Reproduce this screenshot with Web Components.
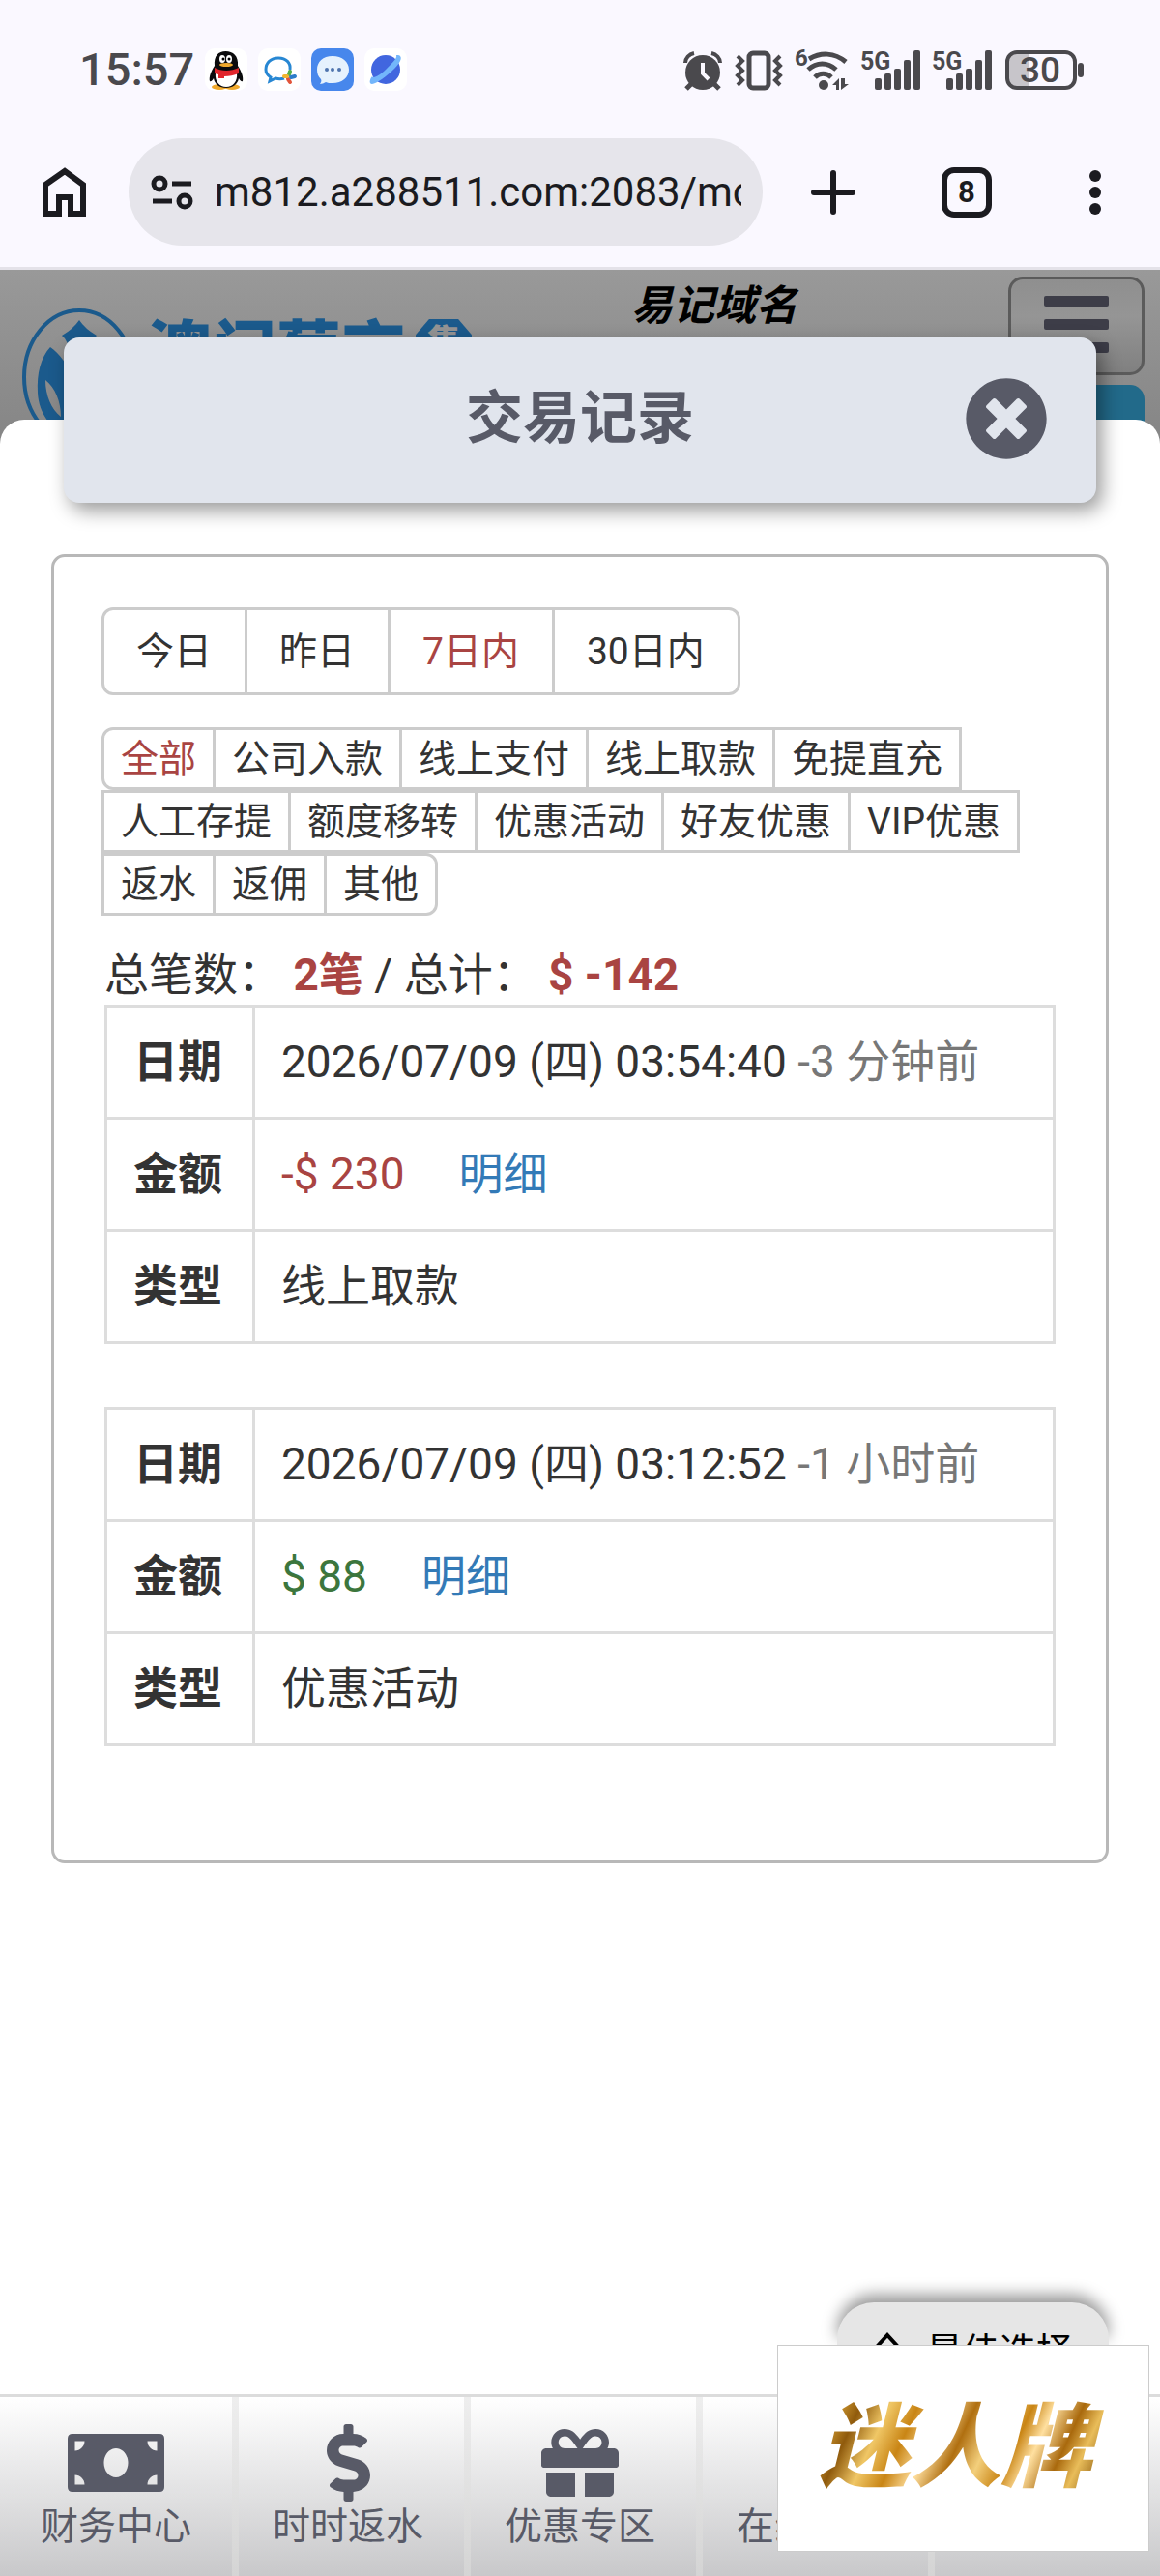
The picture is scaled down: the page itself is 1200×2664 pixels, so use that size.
<!DOCTYPE html>
<html lang="zh-CN">
<head>
<meta charset="utf-8">
<meta name="viewport" content="width=device-width, initial-scale=1">
<title>交易记录</title>
<style>
  body {
    margin: 0;
    background: #fff;
    color: #333;
    font-family: Roboto, "Noto Sans CJK SC", sans-serif;
  }
</style>
</head>
<body>
<mobile-app></mobile-app>

<script>
const reset = /*html*/`
  <style>
    * { box-sizing: border-box; }
    button, input { font: inherit; color: inherit; margin: 0; padding: 0; border: 0; background: none; }
    a { color: inherit; text-decoration: none; }
    svg { display: block; flex: none; overflow: visible; }
  </style>
`;

class StatusBar extends HTMLElement {

  constructor() {
    super();
    this.shadow = this.attachShadow({ mode: 'open' });
  }

  connectedCallback() {
    this.render();
  }

  signal() {
    return /*html*/`
      <svg width="62" height="44" viewBox="0 0 62 44" fill="#4a494d">
        <text x="0" y="22" font-size="25" font-weight="700">5G</text>
        <rect x="15" y="31" width="7" height="12" rx="2"/>
        <rect x="25" y="26" width="7" height="17" rx="2"/>
        <rect x="35" y="21" width="7" height="22" rx="2"/>
        <rect x="45" y="12" width="7" height="31" rx="2"/>
        <rect x="55" y="2" width="7" height="41" rx="2"/>
      </svg>
    `;
  }

  render() {
    this.shadow.innerHTML = /*html*/`
      ${reset}
      <style>
        :host { display: block; background: #faf8ff; color: #4a494d; }
        .bar { display: flex; align-items: center; justify-content: space-between; padding: 50px 78px 26px 82px; }
        .left, .right { display: flex; align-items: center; height: 44px; }
        .left { gap: 11px; }
        .right { gap: 12px; }
        .time { font-size: 47px; line-height: 44px; font-weight: 500; }
      </style>
      <div class="bar">
        <div class="left">
          <span class="time">15:57</span>
          <svg width="44" height="44" viewBox="0 0 44 44">
            <rect width="44" height="44" rx="10" fill="#fff"/>
            <ellipse cx="15" cy="40" rx="8" ry="3" fill="#f0a92c"/>
            <ellipse cx="28" cy="40" rx="8" ry="3" fill="#f0a92c"/>
            <path d="M10 18C9 8 14 3 21.500 3S35 8 34 18c4 6 6 12 5 16-1 1-3-1-4-3-1 6-6 10-13 10S10 37 9 31c-1 2-3 4-4 3-1-4 1-10 5-16z" fill="#0b0b0d"/>
            <path d="M11 26c-1 8 4 14 11 14s12-6 11-14z" fill="#fff"/>
            <path d="M10 20c7 4 17 4 25 0v6c-5 2-10 3-15 3v2h-6v-4l-4-1z" fill="#e0252b"/>
            <ellipse cx="18" cy="11" rx="3" ry="4" fill="#fff"/>
            <ellipse cx="25" cy="11" rx="3" ry="4" fill="#fff"/>
            <circle cx="19" cy="11" r="1.500" fill="#000"/><circle cx="25" cy="11" r="1.500" fill="#000"/>
            <ellipse cx="22" cy="17" rx="7" ry="2" fill="#f0a92c"/>
          </svg>
          <svg width="44" height="44" viewBox="0 0 44 44">
            <rect width="44" height="44" rx="10" fill="#fff"/>
            <path d="M33 22c1-7-4-12-12-12S8 15 8 22c0 4 2 6 5 8l-1 4 6-3c3 1 6 1 9 0" fill="none" stroke="#2787d3" stroke-width="3"/>
            <g stroke-width="4" stroke-linecap="round">
              <path d="M32 27l1-3" stroke="#56b04a"/><path d="M34 30l4-1" stroke="#2c7cc9"/>
              <path d="M31 32l2 3" stroke="#e2553b"/><path d="M30 29l-3 0" stroke="#f2b42e"/>
            </g>
          </svg>
          <svg width="44" height="44" viewBox="0 0 44 44">
            <rect width="44" height="44" rx="10" fill="#4787ec"/>
            <path d="M22 8c10 0 17 6 17 14s-7 14-17 14c-3 0-5 0-7-1-2 1-4 2-6 2 1-2 2-3 1-5-3-3-4-6-4-10 0-8 6-14 16-14z" fill="#e6f2fd"/>
            <circle cx="16" cy="22" r="2" fill="#4f74ad"/><circle cx="22" cy="22" r="2" fill="#4f74ad"/><circle cx="29" cy="22" r="2" fill="#4f74ad"/>
          </svg>
          <svg width="44" height="44" viewBox="0 0 44 44">
            <rect width="44" height="44" rx="10" fill="#fff"/>
            <circle cx="22" cy="22" r="15" fill="#4166df"/>
            <path d="M35 7c5 1 3 7-4 14S12 37 8 37s-2-6 0-8c1 3 8-1 15-8s11-11 10-14z" fill="#73b6fb"/>
          </svg>
        </div>
        <div class="right">
          <svg width="42" height="44" viewBox="0 0 42 44" fill="#4a494d">
            <circle cx="21" cy="25" r="18"/>
            <path d="M3 15c0-5 4-9 9-10M39 15c0-5-4-9-9-10" fill="none" stroke="#4a494d" stroke-width="4"/>
            <path d="M9 37l-5 5M33 37l5 5" stroke="#4a494d" stroke-width="5"/>
            <path d="M21 15v11l6 6" fill="none" stroke="#faf8ff" stroke-width="4"/>
          </svg>
          <svg width="50" height="44" viewBox="0 0 50 44" fill="none" stroke="#4a494d">
            <rect x="15" y="5" width="20" height="36" rx="4" stroke-width="5"/>
            <path d="M3 8l5 5-5 5 5 5-5 5 5 5-5 5M47 8l-5 5 5 5-5 5 5 5-5 5 5 5" stroke-width="4"/>
          </svg>
          <svg width="56" height="44" viewBox="0 0 56 44" fill="#4a494d">
            <text x="0" y="18" font-size="24" font-weight="700">6</text>
            <path d="M15 11c12-7 26-7 38 3M14 22c9-8 20-8 29 0M21 30c5-5 12-5 17 0" fill="none" stroke="#4a494d" stroke-width="5"/>
            <circle cx="30" cy="38" r="5"/>
            <path d="M46 31v12h-3v-5h-4zM48 31v12l8-6h-4v-6z"/>
          </svg>
          ${this.signal()}
          ${this.signal()}
          <svg width="84" height="44" viewBox="0 0 84 44">
            <path d="M6 5h20v34H8q-4 0-4-6V11q0-6 4-6z" fill="#c7c5ca"/>
            <rect x="4" y="4" width="70" height="37" rx="10" fill="none" stroke="#4a494d" stroke-width="4"/>
            <rect x="77" y="15" width="6" height="15" rx="3" fill="#4a494d"/>
            <text x="38" y="35" font-size="37" text-anchor="middle" fill="#4a494d" font-weight="500">30</text>
          </svg>
        </div>
      </div>
    `;
  }
}

class BrowserBar extends HTMLElement {

  constructor() {
    super();
    this.shadow = this.attachShadow({ mode: 'open' });
  }

  connectedCallback() {
    this.render();
  }

  render() {
    this.shadow.innerHTML = /*html*/`
      ${reset}
      <style>
        :host { display: block; background: #faf8ff; border-bottom: 3px solid #e4e2e9; color: #1b1b20; }
        .bar { display: flex; align-items: center; padding: 23px 58px 22px 40px; }
        .home { margin-right: 40px; }
        .address { flex: 1; min-width: 0; display: flex; align-items: center; gap: 22px; height: 111px; padding: 0 22px 0 24px; border-radius: 56px; background: #e6e5eb; }
        .address input { flex: 1; min-width: 0; height: 60px; font-size: 42px; }
        .actions { display: flex; align-items: center; gap: 88px; margin-left: 49px; }
        .tabs { width: 52px; height: 52px; border: 6px solid #1b1b20; border-radius: 13px; font-size: 31px; line-height: 40px; font-weight: 700; text-align: center; }
        .menu { padding-left: 10px; }
      </style>
      <div class="bar">
        <button class="home" aria-label="主页">
          <svg width="53" height="54" viewBox="0 0 53 54" fill="none" stroke="#1b1b20" stroke-width="6">
            <path d="M7 19L27 5l19 14v30H33V32H21v17H7z"/>
          </svg>
        </button>
        <div class="address">
          <svg width="43" height="36" viewBox="0 0 43 36" fill="none" stroke="#1b1b20" stroke-width="5">
            <circle cx="8" cy="9" r="6"/><path d="M21 9h20M1 27h20"/><circle cx="34" cy="27" r="6"/>
          </svg>
          <input type="text" aria-label="网址" value="m812.a288511.com:2083/mo">
        </div>
        <div class="actions">
          <button aria-label="新标签页">
            <svg width="48" height="48" viewBox="0 0 48 48" stroke="#1b1b20" stroke-width="6" stroke-linecap="round">
              <path d="M24 4v40M4 24h40"/>
            </svg>
          </button>
          <button class="tabs">8</button>
          <button class="menu" aria-label="菜单">
            <svg width="18" height="48" viewBox="0 0 18 48" fill="#1b1b20">
              <circle cx="9" cy="7" r="6"/><circle cx="9" cy="24" r="6"/><circle cx="9" cy="41" r="6"/>
            </svg>
          </button>
        </div>
      </div>
    `;
  }
}

class SiteHeader extends HTMLElement {

  constructor() {
    super();
    this.shadow = this.attachShadow({ mode: 'open' });
  }

  connectedCallback() {
    this.render();
  }

  render() {
    this.shadow.innerHTML = /*html*/`
      ${reset}
      <style>
        :host { display: block; height: 180px; overflow: hidden; background: linear-gradient(#999, #858585); }
        .row { display: flex; align-items: flex-start; padding: 7px 16px 0 22px; }
        .logo { display: flex; align-items: flex-start; gap: 10px; padding-top: 32px; color: #1b5a8c; }
        .brand { display: flex; align-items: flex-start; gap: 10px; padding-top: 8px; font-size: 67px; line-height: 76px; font-weight: 900; }
        .badge { margin-top: 4px; width: 58px; height: 68px; background: #1b5a8c; color: #949494; font-size: 34px; line-height: 46px; text-align: center; clip-path: polygon(24% 0, 76% 0, 100% 24%, 100% 76%, 76% 100%, 24% 100%, 0 76%, 0 24%); }
        .domain { margin-left: auto; padding-right: 218px; color: #000; font-size: 43px; line-height: 60px; font-weight: 700; font-style: italic; }
        .side { display: flex; flex-direction: column; gap: 10px; }
        .toggle { width: 141px; height: 102px; border: 3px solid #5b5b5b; border-radius: 15px; display: flex; flex-direction: column; align-items: center; gap: 13px; padding-top: 17px; background: linear-gradient(#8f8f8f, #959595 40%, #808080); }
        .toggle i { width: 67px; height: 11px; border-radius: 2px; background: #3d3d48; }
        .login { height: 60px; border-radius: 15px; background: #226a8a; }
      </style>
      <div class="row">
        <div class="logo">
          <svg width="120" height="140" viewBox="0 0 120 140" fill="#1b5a8c">
            <ellipse cx="60" cy="72" rx="57" ry="69" fill="none" stroke="#1b5a8c" stroke-width="4"/>
            <path d="M60 13q6 9 18 16-7 5-8 20H50q-1-15-8-20 12-7 18-16z"/>
            <path fill-rule="evenodd" d="M30 41c10 7 18 18 22 30v65c-20-8-34-26-35-48-1-20 3-36 13-47zM25 75c0 16 6 30 16 38 0-16-6-30-16-38z"/>
          </svg>
          <div class="brand">澳门葡京<span class="badge">集</span></div>
        </div>
        <span class="domain">易记域名</span>
        <div class="side">
          <button class="toggle" aria-label="导航"><i></i><i></i><i></i></button>
          <button class="login" aria-label="登录"></button>
        </div>
      </div>
    `;
  }
}

class DialogTitle extends HTMLElement {

  constructor() {
    super();
    this.shadow = this.attachShadow({ mode: 'open' });
  }

  connectedCallback() {
    this.render();
  }

  render() {
    this.shadow.innerHTML = /*html*/`
      ${reset}
      <style>
        :host { display: block; }
        .title { display: grid; grid-template-columns: 1fr auto 1fr; align-items: center; height: 171px; padding: 0 50px 4px; border-radius: 16px; background: #e1e5ed; color: #585a67; box-shadow: 6px 8px 20px rgba(0, 0, 0, 0.4); }
        h1 { grid-column: 2; margin: 0; font-size: 59px; line-height: 80px; font-weight: 700; }
        button { justify-self: end; }
      </style>
      <div class="title">
        <h1><slot></slot></h1>
        <button aria-label="关闭">
          <svg width="86" height="86" viewBox="0 0 512 512" fill="#585a67">
            <path d="M256 8C119 8 8 119 8 256s111 248 248 248 248-111 248-248S393 8 256 8zm121.600 313.100c4.700 4.700 4.700 12.300 0 17L338 377.600c-4.700 4.700-12.300 4.700-17 0L256 312l-65.100 65.600c-4.700 4.700-12.300 4.700-17 0L134.400 338c-4.700-4.700-4.700-12.300 0-17l65.600-65-65.600-65.100c-4.700-4.700-4.700-12.300 0-17l39.600-39.600c4.700-4.700 12.300-4.700 17 0l65 65.700 65.100-65.600c4.700-4.700 12.300-4.700 17 0l39.600 39.600c4.700 4.700 4.700 12.300 0 17L312 256l65.600 65.100z"/>
          </svg>
        </button>
      </div>
    `;
  }
}

class FilterGroup extends HTMLElement {

  constructor() {
    super();
    this.shadow = this.attachShadow({ mode: 'open' });
  }

  connectedCallback() {
    this.render();
    this.shadow.addEventListener('click', (event) => {
      const button = event.target.closest('button');
      if (button) this.select(button);
    });
  }

  select(button) {
    this.shadow.querySelectorAll('button').forEach(item => {
      item.setAttribute('aria-pressed', item === button);
    });
  }

  render() {
    const options = this.getAttribute('options').split(',');
    const active = this.getAttribute('active');

    this.shadow.innerHTML = /*html*/`
      ${reset}
      <style>
        :host { display: block; }
        .group { display: flex; flex-wrap: wrap; }
        button { height: 65px; padding: 0 17px; margin-right: -3px; border: 3px solid #ccc; background: #fff; color: #333; font-size: 39px; line-height: 56px; white-space: nowrap; }
        :host([size="large"]) button { height: 91px; padding: 0 34px 0 33px; }
        button:first-child { border-radius: 12px 0 0 12px; }
        button:last-child { border-radius: 0 12px 12px 0; }
        button[aria-pressed="true"] { color: #a94442; }
      </style>
      <div class="group" role="group">
        ${options.map(name => `<button aria-pressed="${name === active}">${name}</button>`).join('')}
      </div>
    `;
  }
}

class RecordTable extends HTMLElement {

  constructor() {
    super();
    this.shadow = this.attachShadow({ mode: 'open' });
  }

  connectedCallback() {
    this.render();
  }

  render() {
    const amount = this.getAttribute('amount');
    const tone = amount.startsWith('-') ? 'out' : 'in';

    this.shadow.innerHTML = /*html*/`
      ${reset}
      <style>
        :host { display: block; }
        table { width: 100%; border-collapse: collapse; font-size: 46px; line-height: 58px; }
        th, td { height: 116px; border: 3px solid #ddd; padding: 0 27px 2px; text-align: left; }
        th { width: 153px; white-space: nowrap; }
        .ago { color: #777; }
        .out { color: #a94442; }
        .in { color: #3c763d; }
        a { margin-left: 56px; color: #337ab7; }
      </style>
      <table>
        <tr><th scope="row">日期</th><td>${this.getAttribute('date')} <span class="ago">${this.getAttribute('ago')}</span></td></tr>
        <tr><th scope="row">金额</th><td><span class="${tone}">${amount}</span><a href="#detail">明细</a></td></tr>
        <tr><th scope="row">类型</th><td>${this.getAttribute('kind')}</td></tr>
      </table>
    `;
  }
}

class RecordPanel extends HTMLElement {

  constructor() {
    super();
    this.shadow = this.attachShadow({ mode: 'open' });
  }

  connectedCallback() {
    this.render();
  }

  render() {
    this.shadow.innerHTML = /*html*/`
      ${reset}
      <style>
        :host { display: block; }
        .panel { border: 3px solid #b8b8b8; border-radius: 14px; padding: 52px 49px 118px; background: #fff; }
        .kinds { margin-top: 33px; }
        .summary { margin: 30px 3px 0; font-size: 46px; line-height: 62px; }
        .summary b { color: #a94442; }
        .records { display: flex; flex-direction: column; gap: 65px; padding: 0 3px; }
      </style>
      <section class="panel">
        <filter-group size="large" options="今日,昨日,7日内,30日内" active="7日内"></filter-group>
        <filter-group class="kinds" options="全部,公司入款,线上支付,线上取款,免提直充,人工存提,额度移转,优惠活动,好友优惠,VIP优惠,返水,返佣,其他" active="全部"></filter-group>
        <p class="summary">总笔数： <b>2笔</b> / 总计： <b>$ -142</b></p>
        <div class="records">
          <record-table date="2026/07/09 (四) 03:54:40" ago="-3 分钟前" amount="-$ 230" kind="线上取款"></record-table>
          <record-table date="2026/07/09 (四) 03:12:52" ago="-1 小时前" amount="$ 88" kind="优惠活动"></record-table>
        </div>
      </section>
    `;
  }
}

class BottomNav extends HTMLElement {

  constructor() {
    super();
    this.shadow = this.attachShadow({ mode: 'open' });
  }

  connectedCallback() {
    this.render();
  }

  render() {
    this.shadow.innerHTML = /*html*/`
      ${reset}
      <style>
        :host { display: block; }
        nav { display: grid; grid-template-columns: repeat(5, 1fr); height: 188px; border-top: 3px solid #dcdcdc; background: linear-gradient(#fff, #c8c8ca); color: #585a67; }
        a { display: flex; flex-direction: column; align-items: center; padding-top: 28px; font-size: 39px; line-height: 52px; white-space: nowrap; }
        a + a { background: linear-gradient(#eee, #d4d4d4) left / 7px 100% no-repeat; }
        .blank { height: 80px; }
      </style>
      <nav>
        <a href="#finance">
          <svg width="100" height="80" viewBox="0 0 640 512" fill="#585a67">
            <path fill-rule="evenodd" d="M32 64h576q32 0 32 32v320q0 32-32 32H32q-32 0-32-32V96q0-32 32-32zM48 112v64c35.300 0 64-28.700 64-64zm0 288h64c0-35.300-28.700-64-64-64zm272-48c44 0 80-43 80-96s-36-96-80-96-80 43-80 96 36 96 80 96zm272 48v-64c-35.300 0-64 28.700-64 64zm0-224v-64h-64c0 35.300 28.700 64 64 64z"/>
          </svg>
          财务中心
        </a>
        <a href="#rebate">
          <svg width="45" height="80" viewBox="0 0 288 512" fill="#585a67">
            <path d="M209.200 233.400l-108-31.600C88.700 198.200 80 186.500 80 173.500c0-16.300 13.200-29.500 29.500-29.500h66.300c12.200 0 24.200 3.700 34.200 10.500 6.100 4.100 14.300 3.100 19.500-2l34.800-34c7.100-6.900 6.100-18.400-1.800-24.500C238 74.800 207.400 64.100 176 64V16c0-8.800-7.200-16-16-16h-32c-8.800 0-16 7.200-16 16v48h-2.500C45.800 64-5.400 118.700.5 183.600c4.200 46.100 39.400 83.600 83.800 96.600l102.500 30c12.500 3.700 21.200 15.300 21.200 28.300 0 16.300-13.200 29.500-29.500 29.500h-66.300C100 368 88 364.300 78 357.500c-6.100-4.100-14.300-3.100-19.500 2l-34.800 34c-7.100 6.900-6.100 18.400 1.800 24.500 24.500 19.200 55.100 29.900 86.500 30v48c0 8.800 7.200 16 16 16h32c8.800 0 16-7.200 16-16v-48.200c46.600-.9 90.300-28.600 105.700-72.700 21.500-61.600-14.600-124.800-72.500-141.700z"/>
          </svg>
          时时返水
        </a>
        <a href="#promo">
          <svg width="80" height="80" viewBox="0 0 512 512" fill="#585a67">
            <path d="M32 448c0 17.700 14.300 32 32 32h160V320H32v128zm256 32h160c17.700 0 32-14.300 32-32V320H288v160zm192-320h-42.100c6.200-12.100 10.100-25.500 10.100-40 0-48.500-39.500-88-88-88-41.600 0-68.500 21.300-103 68.300-34.500-47-61.400-68.300-103-68.300-48.500 0-88 39.500-88 88 0 14.500 3.800 27.900 10.100 40H32c-17.700 0-32 14.300-32 32v80c0 8.800 7.200 16 16 16h480c8.800 0 16-7.200 16-16v-80c0-17.700-14.300-32-32-32zm-326.100 0c-22.100 0-40-17.900-40-40s17.900-40 40-40c19.900 0 34.600 3.300 86.100 80h-86.100zm206.100 0h-86.100c51.400-76.500 65.700-80 86.100-80 22.100 0 40 17.900 40 40s-17.900 40-40 40z"/>
          </svg>
          优惠专区
        </a>
        <a href="#service"><span class="blank"></span>在线客服</a>
        <a href="#member" aria-label="会员"></a>
      </nav>
    `;
  }
}

class FloatAd extends HTMLElement {

  constructor() {
    super();
    this.shadow = this.attachShadow({ mode: 'open' });
  }

  connectedCallback() {
    this.render();
  }

  render() {
    this.shadow.innerHTML = /*html*/`
      ${reset}
      <style>
        :host { display: block; position: absolute; right: 11px; bottom: 25px; z-index: 3; }
        .best { display: flex; align-items: flex-start; gap: 26px; width: 281px; height: 44px; margin-left: 62px; padding: 23px 0 0 38px; border-radius: 38px 38px 0 0; background: #e6e6e6; color: #000; font-size: 38px; line-height: 56px; white-space: nowrap; box-shadow: 0 -8px 16px rgba(0, 0, 0, 0.4); }
        .best svg { margin-top: 8px; }
        .ad { display: flex; align-items: center; justify-content: center; position: relative; width: 385px; height: 214px; border: 1px solid #ccc; background: #fff; }
        .gold {
          padding: 0 20px 0 4px;
          font-size: 94px;
          line-height: 140px;
          font-weight: 900;
          font-style: italic;
          color: transparent;
          background: linear-gradient(115deg, #b67a13, #e0a93a 8%, #8f5a0c 16%, #f0c766 24%, #c98515 32%, #ffe0a0 40%, #b06f10 48%, #f3cf7c 56%, #c98515 64%, #ffe0a0 70%, #a9690d 78%, #e9bd5a 84%, #8c5b10 92%, #d9a63c);
          background-clip: text;
          -webkit-background-clip: text;
        }
      </style>
      <button class="best">
        <svg width="28" height="30" viewBox="0 0 28 30" fill="none" stroke="#000" stroke-width="4"><path d="M2 16L14 3l12 13M5 27l9-10 9 10"/></svg>
        最佳选择
      </button>
      <div class="ad"><span class="gold">迷人牌</span></div>
    `;
  }
}

class MobileApp extends HTMLElement {

  constructor() {
    super();
    this.shadow = this.attachShadow({ mode: 'open' });
  }

  connectedCallback() {
    this.render();
  }

  render() {
    this.shadow.innerHTML = /*html*/`
      ${reset}
      <style>
        :host { display: flex; flex-direction: column; min-height: 100vh; position: relative; }
        main { position: relative; flex: 1; display: flex; flex-direction: column; margin-top: -25px; padding: 0 53px; border-radius: 25px 25px 0 0; background: #fff; }
        dialog-title { margin: -85px 13px 53px; }
      </style>
      <status-bar></status-bar>
      <browser-bar></browser-bar>
      <site-header></site-header>
      <main>
        <dialog-title>交易记录</dialog-title>
        <record-panel></record-panel>
      </main>
      <bottom-nav></bottom-nav>
      <float-ad></float-ad>
    `;
  }
}

customElements.define('status-bar', StatusBar);
customElements.define('browser-bar', BrowserBar);
customElements.define('site-header', SiteHeader);
customElements.define('dialog-title', DialogTitle);
customElements.define('filter-group', FilterGroup);
customElements.define('record-table', RecordTable);
customElements.define('record-panel', RecordPanel);
customElements.define('bottom-nav', BottomNav);
customElements.define('float-ad', FloatAd);
customElements.define('mobile-app', MobileApp);
</script>
</body>
</html>
